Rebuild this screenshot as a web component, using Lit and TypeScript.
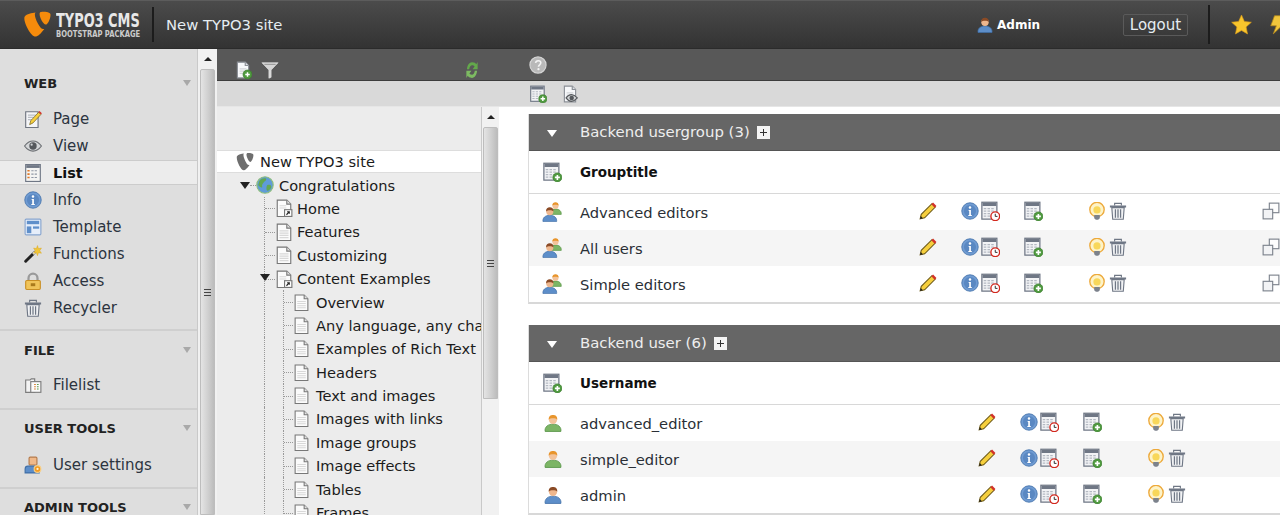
import { LitElement, html, css, svg } from 'lit';
import { customElement } from 'lit/decorators.js';

// every icon is drawn on a 16x16 grid and scaled by the .ic classes
const greenPlus = (cx = 12, cy = 12, r = 4) => svg`
  <circle cx=${cx} cy=${cy} r=${r} fill="#4f9a3f" stroke="#3b7d2e" stroke-width=".6"/>
  <path d="M${cx - 2} ${cy}h4M${cx} ${cy - 2}v4" stroke="#fff" stroke-width="1.3"/>`;

const tableBase = svg`
  <rect x="1.5" y="1" width="12" height="13.5" fill="#f2f3f5" stroke="#6f7785"/>
  <rect x="2" y="1.5" width="11" height="2.500" fill="#6f7785"/>
  <path d="M3 6h9M3 8h9M3 10h9M3 12h9" stroke="#b4b9c2" stroke-dasharray="2 1"/>`;

const docBase = svg`
  <path d="M3 1h7l3 3v11H3z" fill="#f7f8fa" stroke="#8b8f96"/>
  <path d="M10 1v3h3" fill="#dfe1e5" stroke="#8b8f96"/>
  <path d="M5 7h6M5 9h6M5 11h6" stroke="#d2d4d8"/>`;

const person = (head: string, hair: string, body: string, bodyEdge: string) => svg`
  <path d="M1 15.500c-.6-4 2.500-6.500 7-6.500s7.600 2.500 7 6.500z" fill=${body} stroke=${bodyEdge} stroke-width=".7"/>
  <circle cx="8" cy="5.200" r="3.700" fill=${head}/>
  <path d="M4.200 5C4 2 5.800.8 8 .8s4 1.200 3.800 4.200C10.500 3.400 5.500 3.400 4.200 5z" fill=${hair}/>`;

const LOGO_LEFT = 'M11.800 10.600c-.2 0-.4.100-.5.100-1.700 0-4.100-5.800-4.100-7.700 0-.7.200-.9.400-1.100C5.700 2.100 3.200 2.800 2.400 3.800c-.2.200-.3.600-.3 1.100 0 3 3.200 9.800 5.400 9.800 1 0 2.700-1.700 4.300-4.100z';
const LOGO_RIGHT = 'M10.800 1.500c2 0 4 .3 4 1.500 0 2.400-1.500 5.300-2.300 5.300-1.300 0-3-3.800-3-5.600 0-.8.300-1.200 1.300-1.200z';

const ICONS: Record<string, unknown> = {
  page: svg`
    <path d="M1.500 1.500h11v14h-11z" fill="#f4f5f7" stroke="#6f7580"/>
    <path d="M3.500 4.500h7M3.500 6.500h6M3.500 8.500h4" stroke="#b9bdc4"/>
    <path d="M5 13l1-3.500 7-7.500 2 2-7 7.500z" fill="#f6cf3d" stroke="#6b5a1c" stroke-width=".6"/>
    <path d="M12.800 1.800l2.200 2.200.9-1.100-2.100-2.100z" fill="#d3322a"/>`,
  view: svg`
    <path d="M.5 8C3 4.500 5.500 3.500 8 3.500s5 1 7.500 4.500c-2.500 3.500-5 4.500-7.500 4.500S3 11.500.5 8z" fill="#d4d6d8" stroke="#6b6e72"/>
    <circle cx="8" cy="8" r="3.300" fill="#55585c"/>
    <circle cx="6.800" cy="6.800" r="1" fill="#cfd1d4"/>`,
  list: svg`
    <rect x="1.500" y=".5" width="13" height="15" fill="#f4f4f2" stroke="#6f7785"/>
    <rect x="2" y="1" width="12" height="2.500" fill="#6f7785"/>
    <path d="M3 6h2M3 9h2M3 12h2" stroke="#e0792a" stroke-width="1.500"/>
    <path d="M6.500 6h6M6.500 9h6M6.500 12h6" stroke="#8e96a4" stroke-dasharray="2 1"/>`,
  info: svg`
    <circle cx="8" cy="8" r="7.300" fill="#6f9bd2" stroke="#4b77ae" stroke-width=".8"/>
    <circle cx="8" cy="8" r="5.400" fill="#5a88c2"/>
    <path d="M6.800 7h2v4.500h.8v1H6.500v-1h.8V8h-.5z" fill="#fff"/>
    <circle cx="8" cy="4.800" r="1.100" fill="#fff"/>`,
  template: svg`
    <rect x="1" y="1" width="14" height="14" rx="1" fill="#e6eefa" stroke="#87a5cf"/>
    <rect x="2.500" y="2.500" width="11" height="3" fill="#5f8fca"/>
    <rect x="2.500" y="7.500" width="4" height="6" fill="#5f8fca"/>
    <rect x="8" y="7.500" width="5.500" height="2" fill="#5f8fca"/>`,
  wand: svg`
    <path d="M1.500 14.500l8-8" stroke="#222" stroke-width="2.600" stroke-linecap="round"/>
    <path d="M8 8l1.800-1.800" stroke="#ddd" stroke-width="2.400"/>
    <path d="M12 .5l.8 2.700 2.700-.5-1.500 2.300 1.500 2.300-2.700-.4-.8 2.600-1-2.600-2.500.4 1.500-2.300L8.500 2.700l2.500.5z" fill="#f1c63a" stroke="#d9a520" stroke-width=".4"/>`,
  lock: svg`
    <path d="M4 8V5.500a4 4 0 018 0V8" fill="none" stroke="#9a9a9a" stroke-width="2"/>
    <rect x="1.500" y="7.500" width="13" height="8" rx="1" fill="#f0c45a" stroke="#c98f25"/>
    <rect x="6" y="10" width="4" height="2.600" fill="#a97a1c"/>`,
  trash: svg`
    <path d="M.8 4h14.400" stroke="#6f7785" stroke-width="1.800"/>
    <path d="M5 3V1.200h6V3" fill="none" stroke="#6f7785"/>
    <path d="M2.500 5h11l-.8 10.300H3.300z" fill="#f2f3f5" stroke="#6f7785"/>
    <path d="M5.700 6.500v7.500M8 6.500v7.500M10.300 6.500v7.500" stroke="#6f7785" stroke-width="1.100"/>`,
  filelist: svg`
    <path d="M1.500 3.500h4l1-1h3v12h-8z" fill="#f3f3f3" stroke="#7c7c7c"/>
    <rect x="6" y="5" width="9" height="9.500" fill="#fbfbfb" stroke="#7c7c7c"/>
    <path d="M9 7.500h1.500M9 9.500h1.500M9 11.500h1.500" stroke="#d87a2a"/>
    <path d="M11.500 7.500H13M11.500 9.500H13M11.500 11.500H13" stroke="#5c9a4a"/>`,
  usersettings: svg`
    <rect x="4.500" y="1" width="7" height="7" rx="1" fill="#f0b98a" stroke="#b57a4a"/>
    <path d="M1 15v-3.500C1 10 2 9 3.500 9h8c1.500 0 2 1 2 2.500V15z" fill="#5d8ec9" stroke="#3f6ea6"/>
    <circle cx="12" cy="11.500" r="3" fill="#f39a1f" stroke="#f7d08a"/>
    <circle cx="12" cy="11.500" r="1" fill="#fff1d0"/>`,
  docnew: svg`${docBase}${greenPlus()}`,
  filter: svg`
    <path d="M.8 1.500h14.400L9 8v6.500l-2 .8V8z" fill="#d5d5d5" stroke="#eee" stroke-width=".5"/>
    <path d="M3 3h10" stroke="#9a9a9a"/>`,
  refresh: svg`
    <path d="M3.500 7.300C3.800 3.800 5.500 1 8 1s3 .8 3.800 1.800L13 .8v6.500H8.500l1.800-2.500C9.500 4 9 3.800 8 3.800S5.800 5 5.500 7.300z" fill="#63a84b"/>
    <path d="M12.500 8.700c-.3 3.500-2 6.300-4.500 6.300s-3-.8-3.800-1.800L3 15.200V8.700h4.500l-1.800 2.500c.8.800 1.300 1 2.300 1s2.200-1.200 2.500-3.500z" fill="#7dbb62"/>`,
  help: svg`
    <circle cx="8" cy="8" r="7.200" fill="#b9b9b9" stroke="#d6d6d6"/>
    <path d="M5.800 6.200C6 4.800 7 4.200 8.200 4.200c1.400 0 2.300.8 2.300 1.900 0 1.700-2.100 1.700-2.100 3.400" fill="none" stroke="#f4f4f4" stroke-width="1.400"/>
    <circle cx="8.400" cy="11.700" r="1" fill="#f4f4f4"/>`,
  tablenew: svg`${tableBase}${greenPlus(12.300, 12.300, 3.600)}`,
  tableclock: svg`${tableBase}
    <circle cx="12.200" cy="12.200" r="3.500" fill="#fff" stroke="#d2281e" stroke-width="1.100"/>
    <path d="M12.200 10.200v2.100h1.800" fill="none" stroke="#333" stroke-width=".8"/>`,
  pageview: svg`${docBase}
    <path d="M4.500 11.500c1.500-2.200 3-3 4.800-3s3.300.8 5.200 3c-1.900 2.200-3.400 3-5.200 3s-3.300-.8-4.800-3z" fill="#d4d6d8" stroke="#55585c"/>
    <circle cx="9.500" cy="11.500" r="2" fill="#55585c"/>`,
  group: svg`
    <g transform="translate(5.500 -.3) scale(.66)">${person('#f3c39a', '#e8952c', '#7cb565', '#4f8f3f')}</g>
    <g transform="translate(0 3.600) scale(.78)">${person('#eeb78e', '#8a4a25', '#5d8ec9', '#3f6ea6')}</g>`,
  usergreen: person('#f3c39a', '#e8952c', '#7cb565', '#4f8f3f'),
  userblue: person('#eeb78e', '#8a4a25', '#5d8ec9', '#3f6ea6'),
  pencil: svg`
    <path d="M1 15l1-4 9.500-9.500 3 3L5 14z" fill="#f6cf3d" stroke="#6b5712" stroke-width=".9"/>
    <path d="M11 2l1.500-1.500 3 3L14 5z" fill="#d3322a"/>
    <path d="M1 15l.6-2.500 1.900 1.900z" fill="#222"/>`,
  bulb: svg`
    <circle cx="8" cy="6.700" r="6.400" fill="#fdf3c8" stroke="#eda93a" stroke-width="1.200"/>
    <circle cx="8" cy="7" r="3.200" fill="#f8d75a"/>
    <path d="M5.500 11.500h5v3L9 15.800H7l-1.500-1.300z" fill="#7c828c"/>`,
  copy: svg`
    <rect x="6.500" y="1" width="8.500" height="8.500" fill="#fdfdfd" stroke="#7c828c"/>
    <rect x="1" y="6.500" width="8.500" height="8.500" fill="#f2f3f5" stroke="#7c828c"/>`,
  star: svg`<path d="M8 .8l2.200 4.900 5.300.6-4 3.600 1.100 5.300L8 12.500l-4.600 2.700 1.100-5.300-4-3.600 5.300-.6z" fill="#f8c52c" stroke="#d99a1a" stroke-width=".5"/>`,
  bolt: svg`<path d="M6 1h9l-3 5h3L5 15.500 7.500 9H3z" fill="#f0c53c" stroke="#b58a1c" stroke-width=".6"/>`,
  t3: svg`<path d=${LOGO_LEFT} fill="#6e6e6e"/><path d=${LOGO_RIGHT} fill="#6e6e6e"/>`,
  globe: svg`
    <circle cx="8" cy="8" r="7.300" fill="#5f9bd8" stroke="#8fbf7a"/>
    <path d="M3 4.500c2-2.500 5-2.800 6-2 .5 1.500-1 2-2 3S5 8 5.500 9.500 3 10 2 8zM10 8c1.500-.5 3-.5 3.500 1s-1.500 3.500-3 4-1.500-3.500-.5-5z" fill="#62a850"/>`,
  doc: svg`
    <path d="M2 1h8.500l3.500 3.500v11H2z" fill="#fbfbfb" stroke="#777"/>
    <path d="M10.500 1v3.500H14" fill="#e4e4e4" stroke="#777"/>
    <path d="M4 7h8M4 9h8M4 11h8M4 13h8" stroke="#d8d8d8"/>`,
  shortcut: svg`
    <path d="M2 1h8.500l3.500 3.500v11H2z" fill="#fbfbfb" stroke="#777"/>
    <path d="M10.500 1v3.500H14" fill="#e4e4e4" stroke="#777"/>
    <path d="M4 6h6M4 8h6" stroke="#d8d8d8"/>
    <rect x="8.500" y="9.500" width="6.500" height="6" fill="#fff" stroke="#777"/>
    <path d="M10.200 14l2.300-2.500M10.800 11.300h1.900v1.900" fill="none" stroke="#222"/>`,
};

const icon = (name: string, cls = '') =>
  html`<svg class="ic ${cls}" viewBox="0 0 16 16">${ICONS[name]}</svg>`;

const MODULES = [
  { title: 'WEB', cls: 'web', items: [['page', 'Page'], ['view', 'View'], ['list', 'List'], ['info', 'Info'], ['template', 'Template'], ['wand', 'Functions'], ['lock', 'Access'], ['trash', 'Recycler']] },
  { title: 'FILE', cls: 'file', items: [['filelist', 'Filelist']] },
  { title: 'USER TOOLS', cls: 'user', items: [['usersettings', 'User settings']] },
  { title: 'ADMIN TOOLS', cls: 'admin', items: [] },
];

const SUBPAGES = ['Overview', 'Any language, any character', 'Examples of Rich Text', 'Headers', 'Text and images',
  'Images with links', 'Image groups', 'Image effects', 'Tables', 'Frames'];

const TABLES = [
  { cls: 't1', title: 'Backend usergroup (3)', column: 'Grouptitle', rows: [['group', 'Advanced editors'], ['group', 'All users'], ['group', 'Simple editors']] },
  { cls: 't2', title: 'Backend user (6)', column: 'Username', rows: [['usergreen', 'advanced_editor'], ['usergreen', 'simple_editor'], ['userblue', 'admin']] },
];

@customElement('app-root')
export class AppRoot extends LitElement {
  static styles = css`
    :host {
      display: block;
      width: 1280px;
      height: 515px;
      overflow: hidden;
      background: #fff;
      color: #222;
      font-family: 'DejaVu Sans', Verdana, sans-serif;
      font-size: 14px;
    }
    .ic { display: block; width: 18px; height: 18px; flex: none; }
    .ic.small { width: 16px; height: 16px; }
    .ic.wide { width: 20px; height: 20px; margin-left: -2px; }
    .ic.t3 { width: 21px; height: 21px; }

    /* top bar */
    .topbar {
      height: 49px;
      box-sizing: border-box;
      display: flex;
      align-items: center;
      overflow: hidden;
      background: linear-gradient(#4b4b4b, #333);
      border-top: 1px solid #5c5c5c;
      border-bottom: 1px solid #2b2b2b;
      color: #e6edf2;
    }
    .topbar > * { flex: none; }
    .logo { width: 33px; height: 30px; margin: -2px 3px 0 20px; }
    .brand { width: 96px; line-height: 1; color: #e8e8e8; white-space: nowrap; }
    .brand b { display: block; font-size: 19px; font-weight: 700; transform: scaleX(.68); transform-origin: left; }
    .brand small { display: block; margin-top: 1px; font-size: 8px; font-weight: 700; color: #ccc; transform: scaleX(.85); transform-origin: left; }
    .vsep { width: 2px; height: 35px; background: #1c1c1c; }
    .site { margin-left: 12px; font-size: 14.8px; width: 811px; }
    .me { display: flex; align-items: center; gap: 4px; width: 146px; font-size: 12px; font-weight: 700; color: #fff; }
    .logout {
      width: 65px; height: 22px; box-sizing: border-box; margin-right: 20px;
      display: flex; align-items: center; justify-content: center;
      border: 1px solid #5a5a5a; border-radius: 2px; font-size: 15px;
    }
    .vsep.right { height: 39px; margin-right: 21px; }
    .star { width: 21px; height: 21px; margin-right: 15px; }
    .bolt { width: 20px; height: 21px; }

    .body { display: flex; height: 466px; }

    /* module menu */
    .menu { width: 197px; flex: none; background: #dedede; }
    .mod { border-bottom: 2px solid #cfcfcf; }
    .mod h3 {
      display: flex; justify-content: space-between; align-items: center;
      height: 24px; margin: 0; padding: 0 6px 0 24px;
      font-size: 13px; font-weight: 700; color: #222;
    }
    .mod h3::after { content: ''; border: 4px solid transparent; border-top: 6px solid #a9a9a9; border-bottom: 0; }
    .web h3 { margin-top: 22px; margin-bottom: 10px; }
    .file h3 { margin-top: 7px; margin-bottom: 9px; }
    .user h3 { margin-top: 6px; margin-bottom: 11px; }
    .admin { border: 0; }
    .admin h3 { margin-top: 6px; }
    .web { padding-bottom: 8px; }
    .file { padding-bottom: 10px; }
    .user { padding-bottom: 9px; }
    .item {
      height: 27px; box-sizing: border-box;
      display: flex; align-items: center; gap: 11px; padding-left: 24px;
      font-size: 15px; color: #2c3440;
    }
    .item.on { height: 25px; margin: 1px 0; background: #ececec; border-top: 1px solid #ccc; border-bottom: 1px solid #ccc; font-weight: 700; font-size: 14.5px; color: #111; }

    /* scrollbars */
    .bar { width: 20px; flex: none; display: flex; flex-direction: column; align-items: center; background: #f1f1f1; border-left: 1px solid #c9c9c9; box-sizing: border-box; }
    .arrow { height: 20px; flex: none; display: flex; align-items: center; }
    .arrow::before { content: ''; border: 4px solid transparent; border-bottom: 4px solid #222; border-top: 0; }
    .thumb {
      width: 15px; flex: none; box-sizing: border-box;
      display: flex; align-items: center; justify-content: center;
      background: linear-gradient(90deg, #e4e4e4, #cfcfcf 55%, #bcbcbc);
      border: 1px solid #bdbdbd; border-radius: 2px 2px 0 0;
    }
    .thumb::before { content: ''; width: 7px; height: 7px; background: repeating-linear-gradient(#444 0 1px, transparent 1px 3px); }
    .bar.side .thumb { height: 446px; }
    .bar.tree-bar { height: 408px; width: 18px; }
    .bar.tree-bar .thumb { height: 272px; }

    .work { flex: 1; min-width: 0; display: flex; flex-direction: column; }
    .dark { height: 32px; flex: none; box-sizing: border-box; display: flex; background: #585858; border-bottom: 1px solid #3d3d3d; }
    .dark-left { width: 312px; display: flex; align-items: flex-end; padding: 0 0 1px 17px; box-sizing: border-box; }
    .dark-left .ic { margin-right: 9px; }
    .dark-left .spin { margin: 0 0 0 175px; }
    .help { margin-top: 7px; }
    .grey { height: 26px; flex: none; box-sizing: border-box; display: flex; align-items: center; gap: 14px; padding-left: 312px; background: #d9d9d9; border-bottom: 1px solid #e6e6e6; }
    .panes { flex: 1; min-height: 0; display: flex; }

    /* page tree */
    .tree { width: 264px; flex: none; overflow: hidden; background: #ececec; padding-top: 43px; box-sizing: border-box; }
    .node { height: 23.4px; display: flex; align-items: center; font-size: 14.6px; white-space: nowrap; color: #1b1b1b; }
    .node span { margin-left: 4px; }
    .node.root { box-sizing: border-box; padding-left: 17px; background: #fff; border-top: 1px solid #ddd; border-bottom: 1px solid #ddd; }
    .node.root span { margin-left: 5px; }
    .lead { width: 47px; height: 100%; flex: none; }
    .guide { width: 18px; height: 100%; flex: none; border-left: 1px dotted #999; }
    .elbow { width: 11px; height: 100%; flex: none; position: relative; box-sizing: border-box; border-left: 1px dotted #999; }
    .elbow::after { content: ''; position: absolute; left: 0; right: 0; top: 50%; border-top: 1px dotted #999; }
    .elbow.sub { width: 10px; }
    .tri { width: 0; height: 0; border: 5px solid transparent; border-top: 7px solid #222; border-bottom: 0; }
    .tri.abs { position: absolute; left: -5px; top: 7px; z-index: 1; }
    .open { width: 23px; flex: none; }
    .dash { width: 6px; flex: none; border-top: 1px dotted #999; }
    .node.l1 span { margin-left: 5px; }
    .node.l3 .ic { width: 17px; height: 17px; }
    .node.l3 span { margin-left: 6px; }

    /* record tables */
    .content { flex: 1; min-width: 0; padding: 7px 0 0 29px; overflow: hidden; }
    .records { margin-bottom: 21px; border-left: 1px solid #dcdcdc; border-bottom: 2px solid #d8d8d8; width: 780px; }
    .records header {
      height: 37px; box-sizing: border-box;
      display: flex; align-items: center;
      background: #666; border-bottom: 1px solid #555; color: #eee; font-size: 14.9px;
    }
    .down { width: 0; height: 0; margin: 3px 23px 0 18px; border: 5px solid transparent; border-top: 7px solid #fff; border-bottom: 0; }
    .plus { width: 13px; height: 13px; margin-left: 7px; background: #f4f4f4; position: relative; }
    .plus::before, .plus::after { content: ''; position: absolute; background: #333; }
    .plus::before { left: 3px; right: 3px; top: 6px; height: 1px; }
    .plus::after { top: 3px; bottom: 3px; left: 6px; width: 1px; }
    .head, .row { display: flex; align-items: center; font-size: 14.7px; color: #2a2f36; }
    .head { height: 43px; box-sizing: border-box; border-bottom: 1px solid #d8d8d8; font-size: 13.5px; font-weight: 700; color: #111; }
    .row { height: 36px; }
    .row.alt { background: #f5f5f5; }
    .lead-ic { width: 36px; padding-left: 15px; flex: none; }
    .name { flex: none; }
    .t1 .name { width: 339px; }
    .t2 .name { width: 398px; }
    .actions { display: grid; grid-template-columns: 42px 21px 43px 63px 21px 153px 18px; align-items: center; margin-bottom: 2px; }
  `;

  private renderMenu() {
    return MODULES.map(
      (mod) => html`<section class="mod ${mod.cls}">
        <h3>${mod.title}</h3>
        ${mod.items.map(([ic, label]) => html`<div class="item ${label === 'List' ? 'on' : ''}">${icon(ic)}${label}</div>`)}
      </section>`
    );
  }

  private renderTree() {
    return html`
      <div class="node root">${icon('t3', 't3')}<span>New TYPO3 site</span></div>
      <div class="node l1"><i class="open"></i><i class="tri"></i><i class="dash"></i>${icon('globe')}<span>Congratulations</span></div>
      ${[['shortcut', 'Home'], ['doc', 'Features'], ['doc', 'Customizing']].map(
        ([ic, label]) => html`<div class="node"><i class="lead"></i><i class="elbow"></i>${icon(ic)}<span>${label}</span></div>`
      )}
      <div class="node"><i class="lead"></i><i class="elbow"><i class="tri abs"></i></i>${icon('shortcut')}<span>Content Examples</span></div>
      ${SUBPAGES.map(
        (label) => html`<div class="node l3"><i class="lead"></i><i class="guide"></i><i class="elbow sub"></i>${icon('doc')}<span>${label}</span></div>`
      )}
    `;
  }

  private renderTable(table: (typeof TABLES)[number]) {
    return html`<section class="records ${table.cls}">
      <header><i class="down"></i>${table.title}<i class="plus"></i></header>
      <div class="head"><div class="lead-ic">${icon('tablenew', 'wide')}</div><div>${table.column}</div></div>
      ${table.rows.map(
        ([ic, label], i) => html`<div class="row ${i === 1 ? 'alt' : ''}">
          <div class="lead-ic">${icon(ic, ic === 'group' ? 'wide' : '')}</div>
          <div class="name">${label}</div>
          <div class="actions">
            ${icon('pencil')}${icon('info')}${icon('tableclock', 'wide')}${icon('tablenew', 'wide')}${icon('bulb')}${icon('trash')}${icon('copy')}
          </div>
        </div>`
      )}
    </section>`;
  }

  render() {
    return html`
      <div class="topbar">
        <svg class="logo" viewBox="0 0 16 16" preserveAspectRatio="none">
          <path d=${LOGO_LEFT} fill="#f58b0c"/>
          <path d=${LOGO_RIGHT} fill="#f58b0c"/>
        </svg>
        <div class="brand"><b>TYPO3 CMS</b><small>BOOTSTRAP PACKAGE</small></div>
        <i class="vsep"></i>
        <div class="site">New TYPO3 site</div>
        <div class="me">${icon('userblue', 'small')}Admin</div>
        <div class="logout">Logout</div>
        <i class="vsep right"></i>
        <svg class="star" viewBox="0 0 16 16">${ICONS.star}</svg>
        <svg class="bolt" viewBox="0 0 16 16">${ICONS.bolt}</svg>
      </div>
      <div class="body">
        <nav class="menu">${this.renderMenu()}</nav>
        <div class="bar side"><i class="arrow"></i><i class="thumb"></i></div>
        <div class="work">
          <div class="dark">
            <div class="dark-left">${icon('docnew')}${icon('filter')}${icon('refresh', 'spin')}</div>
            ${icon('help', 'help')}
          </div>
          <div class="grey">${icon('tablenew')}${icon('pageview')}</div>
          <div class="panes">
            <div class="tree">${this.renderTree()}</div>
            <div class="bar tree-bar"><i class="arrow"></i><i class="thumb"></i></div>
            <div class="content">${TABLES.map((t) => this.renderTable(t))}</div>
          </div>
        </div>
      </div>
    `;
  }
}
